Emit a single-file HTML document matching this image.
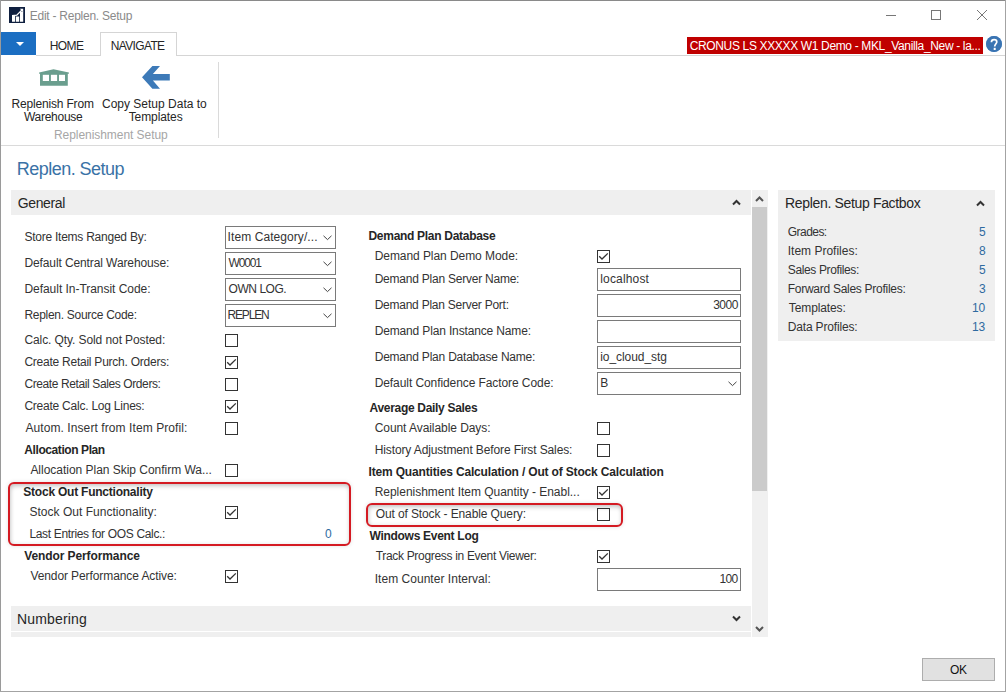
<!DOCTYPE html>
<html><head><meta charset="utf-8">
<style>
html,body{margin:0;padding:0;}
body{width:1006px;height:692px;position:relative;overflow:hidden;background:#fff;font-family:"Liberation Sans",sans-serif;}
.a{position:absolute;}
.t{position:absolute;font-size:12px;line-height:16px;letter-spacing:-0.3px;white-space:nowrap;color:#333;}
.b{font-weight:bold;letter-spacing:-0.25px;color:#262626;}
.cb{position:absolute;width:11px;height:11px;border:1px solid #333;background:#fff;}
.cb svg{position:absolute;left:0;top:0;}
.box{position:absolute;border:1px solid #7a7a7a;background:#fff;}
.dd svg{position:absolute;}
.band{position:absolute;background:#efefef;}
</style></head><body>
<!-- window borders -->
<div class="a" style="left:0;top:0;width:1006px;height:1px;background:#8a8a8a"></div>
<div class="a" style="left:0;top:0;width:1px;height:692px;background:#9a9a9a"></div>
<div class="a" style="left:1005px;top:0;width:1px;height:692px;background:#a3a3a3"></div>
<div class="a" style="left:0;top:691px;width:1006px;height:1px;background:#a3a3a3"></div>

<!-- title bar -->
<div class="a" style="left:9px;top:7px;width:16px;height:16px;background:#0f1f3f">
<svg width="16" height="16" viewBox="0 0 16 16"><path d="M3 9h3.2v5.8H3zM7 9.6h3.2v5.2H7zM11 4.5h3.2v10.3H11z" fill="#fff"/><path d="M3 8.6L7.8 8.2L13.2 2.6" stroke="#fff" stroke-width="1.3" fill="none"/><path d="M10.8 1.8h3.4v3.4z" fill="#fff"/></svg>
</div>
<div class="a" style="left:886px;top:15px;width:10px;height:1px;background:#777"></div>
<div class="a" style="left:931px;top:10px;width:8px;height:8px;border:1px solid #777"></div>
<svg class="a" style="left:976px;top:9px" width="12" height="12" viewBox="0 0 12 12"><path d="M1 1L11 11M11 1L1 11" stroke="#777" stroke-width="1"/></svg>

<!-- ribbon tabs -->
<div class="a" style="left:1px;top:32px;width:35px;height:23px;background:#1b6ec2"></div>
<svg class="a" style="left:15px;top:41px" width="10" height="6"><path d="M1 1h8L5 5z" fill="#fff"/></svg>
<div class="a" style="left:100px;top:32px;width:75px;height:23px;border:1px solid #d5d5d5;border-bottom:none;background:#fff"></div>
<div class="a" style="left:36px;top:55px;width:64px;height:1px;background:#d5d5d5"></div>
<div class="a" style="left:176px;top:55px;width:829px;height:1px;background:#d5d5d5"></div>
<div class="a" style="left:687px;top:37px;width:296px;height:17px;background:#c00000"></div>
<div class="a" style="left:986px;top:36px;width:16px;height:16px;border-radius:50%;background:#3d7cc0"></div>

<!-- ribbon body -->
<svg class="a" style="left:38px;top:68px" width="32" height="20" viewBox="38 68 32 20">
<path d="M39.1 72.5 L53.5 69.2 L68.9 72.5 L68.9 73.8 L67.8 73.8 L67.8 85.8 L40 85.8 L40 73.8 L39.1 73.8 Z" fill="#6a9e8e"/>
<rect x="42.8" y="74.8" width="6.2" height="6.2" fill="#fff"/>
<rect x="50.9" y="74.8" width="6.2" height="6.2" fill="#fff"/>
<rect x="59" y="74.8" width="6" height="6.2" fill="#fff"/>
</svg>
<svg class="a" style="left:140px;top:64px" width="32" height="26" viewBox="140 64 32 26">
<path d="M142 77.3 L152.4 66 L160 66 L152.9 74.1 L169.8 74.1 L169.8 80.6 L152.9 80.6 L160 88.7 L152.4 88.7 Z" fill="#3d7ab8"/>
</svg>
<div class="a" style="left:218px;top:62px;width:1px;height:76px;background:#dadada"></div>
<div class="a" style="left:1px;top:145px;width:1004px;height:1px;background:#dadada"></div>

<!-- page title -->

<!-- General band -->
<div class="band" style="left:11px;top:190px;width:740px;height:25px"></div>
<svg class="a" style="left:732px;top:199px" width="9" height="7"><path d="M1 5.5L4.5 2L8 5.5" stroke="#333" stroke-width="2" fill="none"/></svg>

<!-- scrollbar -->
<div class="a" style="left:752px;top:190px;width:16px;height:447px;background:#f0f0f0"></div>
<div class="a" style="left:752px;top:207px;width:15px;height:284px;background:#cbcbcb"></div>
<svg class="a" style="left:755px;top:195px" width="9" height="8"><path d="M1 6L4.5 2.5L8 6" stroke="#555" stroke-width="2" fill="none"/></svg>
<svg class="a" style="left:755px;top:625px" width="9" height="8"><path d="M1 2L4.5 5.5L8 2" stroke="#555" stroke-width="2" fill="none"/></svg>

<!-- Numbering band -->
<div class="band" style="left:11px;top:606px;width:740px;height:25px"></div>
<div class="band" style="left:11px;top:632px;width:740px;height:5px"></div>
<svg class="a" style="left:732px;top:615px" width="9" height="7"><path d="M1 1.5L4.5 5L8 1.5" stroke="#333" stroke-width="2" fill="none"/></svg>

<!-- Factbox -->
<div class="band" style="left:778px;top:190px;width:217px;height:151px;background:#efefef"></div>
<svg class="a" style="left:976px;top:200px" width="9" height="7"><path d="M1 5.5L4.5 2L8 5.5" stroke="#333" stroke-width="2" fill="none"/></svg>

<!-- OK button -->
<div class="a" style="left:922px;top:658px;width:71px;height:21px;border:1px solid #adadad;background:#e1e1e1"></div>

<!-- FORM CONTENT -->
<div class="box" style="left:225px;top:226px;width:109px;height:21px"></div>
<svg class="a" style="left:323px;top:235px" width="9" height="6"><path d="M0.5 0.8L4.5 4.6L8.5 0.8" stroke="#444" stroke-width="1" fill="none"/></svg>
<div class="box" style="left:225px;top:252px;width:109px;height:21px"></div>
<svg class="a" style="left:323px;top:261px" width="9" height="6"><path d="M0.5 0.8L4.5 4.6L8.5 0.8" stroke="#444" stroke-width="1" fill="none"/></svg>
<div class="box" style="left:225px;top:278px;width:109px;height:21px"></div>
<svg class="a" style="left:323px;top:287px" width="9" height="6"><path d="M0.5 0.8L4.5 4.6L8.5 0.8" stroke="#444" stroke-width="1" fill="none"/></svg>
<div class="box" style="left:225px;top:304px;width:109px;height:21px"></div>
<svg class="a" style="left:323px;top:313px" width="9" height="6"><path d="M0.5 0.8L4.5 4.6L8.5 0.8" stroke="#444" stroke-width="1" fill="none"/></svg>
<div class="cb" style="left:225px;top:334px"></div>
<div class="cb" style="left:225px;top:356px"><svg width="11" height="11" viewBox="0 0 11 11"><path d="M1.2 5.3L4 8L9.8 2.4" stroke="#333" stroke-width="1.3" fill="none"/></svg></div>
<div class="cb" style="left:225px;top:378px"></div>
<div class="cb" style="left:225px;top:400px"><svg width="11" height="11" viewBox="0 0 11 11"><path d="M1.2 5.3L4 8L9.8 2.4" stroke="#333" stroke-width="1.3" fill="none"/></svg></div>
<div class="cb" style="left:225px;top:422px"></div>
<div class="cb" style="left:225px;top:464px"></div>
<div class="cb" style="left:225px;top:506px"><svg width="11" height="11" viewBox="0 0 11 11"><path d="M1.2 5.3L4 8L9.8 2.4" stroke="#333" stroke-width="1.3" fill="none"/></svg></div>
<div class="cb" style="left:225px;top:570px"><svg width="11" height="11" viewBox="0 0 11 11"><path d="M1.2 5.3L4 8L9.8 2.4" stroke="#333" stroke-width="1.3" fill="none"/></svg></div>
<div class="cb" style="left:597px;top:250px"><svg width="11" height="11" viewBox="0 0 11 11"><path d="M1.2 5.3L4 8L9.8 2.4" stroke="#333" stroke-width="1.3" fill="none"/></svg></div>
<div class="box" style="left:597px;top:268px;width:142px;height:21px"></div>
<div class="box" style="left:597px;top:294px;width:142px;height:21px"></div>
<div class="box" style="left:597px;top:320px;width:142px;height:21px"></div>
<div class="box" style="left:597px;top:346px;width:142px;height:21px"></div>
<div class="box" style="left:597px;top:372px;width:142px;height:21px"></div>
<svg class="a" style="left:728px;top:381px" width="9" height="6"><path d="M0.5 0.8L4.5 4.6L8.5 0.8" stroke="#444" stroke-width="1" fill="none"/></svg>
<div class="box" style="left:597px;top:568px;width:142px;height:21px"></div>
<div class="cb" style="left:597px;top:422px"></div>
<div class="cb" style="left:597px;top:444px"></div>
<div class="cb" style="left:597px;top:486px"><svg width="11" height="11" viewBox="0 0 11 11"><path d="M1.2 5.3L4 8L9.8 2.4" stroke="#333" stroke-width="1.3" fill="none"/></svg></div>
<div class="cb" style="left:597px;top:508px"></div>
<div class="cb" style="left:597px;top:550px"><svg width="11" height="11" viewBox="0 0 11 11"><path d="M1.2 5.3L4 8L9.8 2.4" stroke="#333" stroke-width="1.3" fill="none"/></svg></div>
<svg class="a" style="left:986px;top:36px" width="16" height="16" viewBox="0 0 16 16"><circle cx="8" cy="8" r="7.9" fill="#3a74b2"/><path d="M5.4 6.3C5.4 4.6 6.6 3.7 8.1 3.7C9.7 3.7 10.8 4.6 10.8 6C10.8 7.7 8.7 8 8.7 10.6" stroke="#fff" stroke-width="1.7" fill="none"/><rect x="7.7" y="11.8" width="2" height="2.2" fill="#fff"/></svg>
<div class="t" style="left:29.80px;top:8px;font-size:12px;line-height:16px;font-weight:normal;letter-spacing:-0.256px;color:#8a8a8a">Edit - Replen. Setup</div>
<div class="t" style="left:49.70px;top:38px;font-size:12px;line-height:16px;font-weight:normal;letter-spacing:-0.550px;color:#262626">HOME</div>
<div class="t" style="left:110.70px;top:38px;font-size:12px;line-height:16px;font-weight:normal;letter-spacing:-0.638px;color:#262626">NAVIGATE</div>
<div class="t" style="left:689.70px;top:38px;font-size:12px;line-height:16px;font-weight:normal;letter-spacing:-0.350px;color:#fff">CRONUS LS XXXXX W1 Demo - MKL_Vanilla_New - la...</div>
<div class="t" style="left:11.40px;top:96px;font-size:12px;line-height:16px;font-weight:normal;letter-spacing:-0.167px;color:#262626">Replenish From</div>
<div class="t" style="left:24.00px;top:109px;font-size:12px;line-height:16px;font-weight:normal;letter-spacing:-0.275px;color:#262626">Warehouse</div>
<div class="t" style="left:102.00px;top:96px;font-size:12px;line-height:16px;font-weight:normal;letter-spacing:0.000px;color:#262626">Copy Setup Data to</div>
<div class="t" style="left:128.70px;top:109px;font-size:12px;line-height:16px;font-weight:normal;letter-spacing:-0.087px;color:#262626">Templates</div>
<div class="t" style="left:54.00px;top:127px;font-size:12px;line-height:16px;font-weight:normal;letter-spacing:-0.056px;color:#a6a6a6">Replenishment Setup</div>
<div class="t" style="left:16.70px;top:158px;font-size:18px;line-height:22px;font-weight:normal;letter-spacing:-0.517px;color:#3a72a6">Replen. Setup</div>
<div class="t" style="left:17.70px;top:194px;font-size:14px;line-height:18px;font-weight:normal;letter-spacing:-0.350px;color:#262626">General</div>
<div class="t" style="left:16.90px;top:610px;font-size:14px;line-height:18px;font-weight:normal;letter-spacing:0.175px;color:#262626">Numbering</div>
<div class="t" style="left:785.10px;top:194px;font-size:14px;line-height:18px;font-weight:normal;letter-spacing:-0.340px;color:#262626">Replen. Setup Factbox</div>
<div class="t" style="left:787.80px;top:224px;font-size:12px;line-height:16px;font-weight:normal;letter-spacing:-0.550px;color:#333">Grades:</div>
<div class="t" style="left:979.00px;top:224px;font-size:12px;line-height:16px;font-weight:normal;letter-spacing:-0.200px;color:#2e6aa0">5</div>
<div class="t" style="left:787.80px;top:243px;font-size:12px;line-height:16px;font-weight:normal;letter-spacing:-0.008px;color:#333">Item Profiles:</div>
<div class="t" style="left:979.00px;top:243px;font-size:12px;line-height:16px;font-weight:normal;letter-spacing:-0.200px;color:#2e6aa0">8</div>
<div class="t" style="left:787.80px;top:262px;font-size:12px;line-height:16px;font-weight:normal;letter-spacing:-0.371px;color:#333">Sales Profiles:</div>
<div class="t" style="left:979.00px;top:262px;font-size:12px;line-height:16px;font-weight:normal;letter-spacing:-0.200px;color:#2e6aa0">5</div>
<div class="t" style="left:787.80px;top:281px;font-size:12px;line-height:16px;font-weight:normal;letter-spacing:-0.277px;color:#333">Forward Sales Profiles:</div>
<div class="t" style="left:979.00px;top:281px;font-size:12px;line-height:16px;font-weight:normal;letter-spacing:-0.200px;color:#2e6aa0">3</div>
<div class="t" style="left:788.80px;top:300px;font-size:12px;line-height:16px;font-weight:normal;letter-spacing:-0.112px;color:#333">Templates:</div>
<div class="t" style="left:972.00px;top:300px;font-size:12px;line-height:16px;font-weight:normal;letter-spacing:-0.200px;color:#2e6aa0">10</div>
<div class="t" style="left:787.80px;top:319px;font-size:12px;line-height:16px;font-weight:normal;letter-spacing:-0.175px;color:#333">Data Profiles:</div>
<div class="t" style="left:972.00px;top:319px;font-size:12px;line-height:16px;font-weight:normal;letter-spacing:-0.200px;color:#2e6aa0">13</div>
<div class="t" style="left:950.00px;top:662px;font-size:12px;line-height:16px;font-weight:normal;letter-spacing:-0.300px;color:#111">OK</div>
<div class="t" style="left:24.40px;top:229px;font-size:12px;line-height:16px;font-weight:normal;letter-spacing:-0.240px;color:#333">Store Items Ranged By:</div>
<div class="t" style="left:227.60px;top:229px;font-size:12px;line-height:16px;font-weight:normal;letter-spacing:0.075px;color:#333">Item Category/...</div>
<div class="t" style="left:24.40px;top:255px;font-size:12px;line-height:16px;font-weight:normal;letter-spacing:-0.104px;color:#333">Default Central Warehouse:</div>
<div class="t" style="left:228.60px;top:255px;font-size:12px;line-height:16px;font-weight:normal;letter-spacing:-1.150px;color:#333">W0001</div>
<div class="t" style="left:24.40px;top:281px;font-size:12px;line-height:16px;font-weight:normal;letter-spacing:-0.033px;color:#333">Default In-Transit Code:</div>
<div class="t" style="left:228.60px;top:281px;font-size:12px;line-height:16px;font-weight:normal;letter-spacing:-0.467px;color:#333">OWN LOG.</div>
<div class="t" style="left:24.40px;top:307px;font-size:12px;line-height:16px;font-weight:normal;letter-spacing:-0.283px;color:#333">Replen. Source Code:</div>
<div class="t" style="left:227.60px;top:307px;font-size:12px;line-height:16px;font-weight:normal;letter-spacing:-1.200px;color:#333">REPLEN</div>
<div class="t" style="left:24.40px;top:332px;font-size:12px;line-height:16px;font-weight:normal;letter-spacing:-0.088px;color:#333">Calc. Qty. Sold not Posted:</div>
<div class="t" style="left:24.40px;top:354px;font-size:12px;line-height:16px;font-weight:normal;letter-spacing:-0.242px;color:#333">Create Retail Purch. Orders:</div>
<div class="t" style="left:24.40px;top:376px;font-size:12px;line-height:16px;font-weight:normal;letter-spacing:-0.392px;color:#333">Create Retail Sales Orders:</div>
<div class="t" style="left:24.40px;top:398px;font-size:12px;line-height:16px;font-weight:normal;letter-spacing:-0.232px;color:#333">Create Calc. Log Lines:</div>
<div class="t" style="left:25.40px;top:420px;font-size:12px;line-height:16px;font-weight:normal;letter-spacing:0.087px;color:#333">Autom. Insert from Item Profil:</div>
<div class="t" style="left:24.30px;top:442px;font-size:12px;line-height:16px;font-weight:bold;letter-spacing:-0.414px;color:#262626">Allocation Plan</div>
<div class="t" style="left:30.40px;top:462px;font-size:12px;line-height:16px;font-weight:normal;letter-spacing:-0.022px;color:#333">Allocation Plan Skip Confirm Wa...</div>
<div class="t" style="left:23.30px;top:484px;font-size:12px;line-height:16px;font-weight:bold;letter-spacing:-0.227px;color:#262626">Stock Out Functionality</div>
<div class="t" style="left:29.40px;top:504px;font-size:12px;line-height:16px;font-weight:normal;letter-spacing:0.029px;color:#333">Stock Out Functionality:</div>
<div class="t" style="left:29.40px;top:526px;font-size:12px;line-height:16px;font-weight:normal;letter-spacing:-0.335px;color:#333">Last Entries for OOS Calc.:</div>
<div class="t" style="left:325.00px;top:526px;font-size:12px;line-height:16px;font-weight:normal;letter-spacing:-0.200px;color:#2e6aa0">0</div>
<div class="t" style="left:24.30px;top:548px;font-size:12px;line-height:16px;font-weight:bold;letter-spacing:-0.106px;color:#262626">Vendor Performance</div>
<div class="t" style="left:30.40px;top:568px;font-size:12px;line-height:16px;font-weight:normal;letter-spacing:-0.092px;color:#333">Vendor Performance Active:</div>
<div class="t" style="left:368.50px;top:228px;font-size:12px;line-height:16px;font-weight:bold;letter-spacing:-0.294px;color:#262626">Demand Plan Database</div>
<div class="t" style="left:374.70px;top:248px;font-size:12px;line-height:16px;font-weight:normal;letter-spacing:-0.064px;color:#333">Demand Plan Demo Mode:</div>
<div class="t" style="left:374.70px;top:271px;font-size:12px;line-height:16px;font-weight:normal;letter-spacing:-0.232px;color:#333">Demand Plan Server Name:</div>
<div class="t" style="left:374.70px;top:297px;font-size:12px;line-height:16px;font-weight:normal;letter-spacing:-0.250px;color:#333">Demand Plan Server Port:</div>
<div class="t" style="left:374.70px;top:323px;font-size:12px;line-height:16px;font-weight:normal;letter-spacing:-0.150px;color:#333">Demand Plan Instance Name:</div>
<div class="t" style="left:374.70px;top:349px;font-size:12px;line-height:16px;font-weight:normal;letter-spacing:-0.217px;color:#333">Demand Plan Database Name:</div>
<div class="t" style="left:374.70px;top:375px;font-size:12px;line-height:16px;font-weight:normal;letter-spacing:-0.083px;color:#333">Default Confidence Factore Code:</div>
<div class="t" style="left:600.20px;top:271px;font-size:12px;line-height:16px;font-weight:normal;letter-spacing:0.175px;color:#333">localhost</div>
<div class="t" style="left:713.20px;top:297px;font-size:12px;line-height:16px;font-weight:normal;letter-spacing:-0.500px;color:#333">3000</div>
<div class="t" style="left:600.20px;top:349px;font-size:12px;line-height:16px;font-weight:normal;letter-spacing:-0.050px;color:#333">io_cloud_stg</div>
<div class="t" style="left:600.20px;top:375px;font-size:12px;line-height:16px;font-weight:normal;letter-spacing:0.000px;color:#333">B</div>
<div class="t" style="left:369.50px;top:400px;font-size:12px;line-height:16px;font-weight:bold;letter-spacing:-0.306px;color:#262626">Average Daily Sales</div>
<div class="t" style="left:374.70px;top:420px;font-size:12px;line-height:16px;font-weight:normal;letter-spacing:-0.065px;color:#333">Count Available Days:</div>
<div class="t" style="left:374.70px;top:442px;font-size:12px;line-height:16px;font-weight:normal;letter-spacing:-0.117px;color:#333">History Adjustment Before First Sales:</div>
<div class="t" style="left:368.50px;top:464px;font-size:12px;line-height:16px;font-weight:bold;letter-spacing:-0.165px;color:#262626">Item Quantities Calculation / Out of Stock Calculation</div>
<div class="t" style="left:374.70px;top:484px;font-size:12px;line-height:16px;font-weight:normal;letter-spacing:-0.028px;color:#333">Replenishment Item Quantity - Enabl...</div>
<div class="t" style="left:375.70px;top:506px;font-size:12px;line-height:16px;font-weight:normal;letter-spacing:-0.115px;color:#333">Out of Stock - Enable Query:</div>
<div class="t" style="left:369.50px;top:528px;font-size:12px;line-height:16px;font-weight:bold;letter-spacing:-0.288px;color:#262626">Windows Event Log</div>
<div class="t" style="left:375.70px;top:548px;font-size:12px;line-height:16px;font-weight:normal;letter-spacing:-0.317px;color:#333">Track Progress in Event Viewer:</div>
<div class="t" style="left:374.70px;top:571px;font-size:12px;line-height:16px;font-weight:normal;letter-spacing:0.035px;color:#333">Item Counter Interval:</div>
<div class="t" style="left:719.50px;top:571px;font-size:12px;line-height:16px;font-weight:normal;letter-spacing:-0.650px;color:#333">100</div>
<div class="a" style="left:8px;top:482px;width:339px;height:59.5px;border:2.4px solid #d41a22;border-radius:6px;box-shadow:inset 1px 3px 5px -1px rgba(0,0,0,0.2),inset 0 0 4px rgba(0,0,0,0.1),0 0 4px rgba(0,0,0,0.12)"></div>
<div class="a" style="left:365.8px;top:502.8px;width:253.4px;height:20px;border:2.4px solid #d41a22;border-radius:6px;box-shadow:inset 1px 3px 5px -1px rgba(0,0,0,0.2),inset 0 0 4px rgba(0,0,0,0.1),0 0 4px rgba(0,0,0,0.12)"></div>

</body></html>
